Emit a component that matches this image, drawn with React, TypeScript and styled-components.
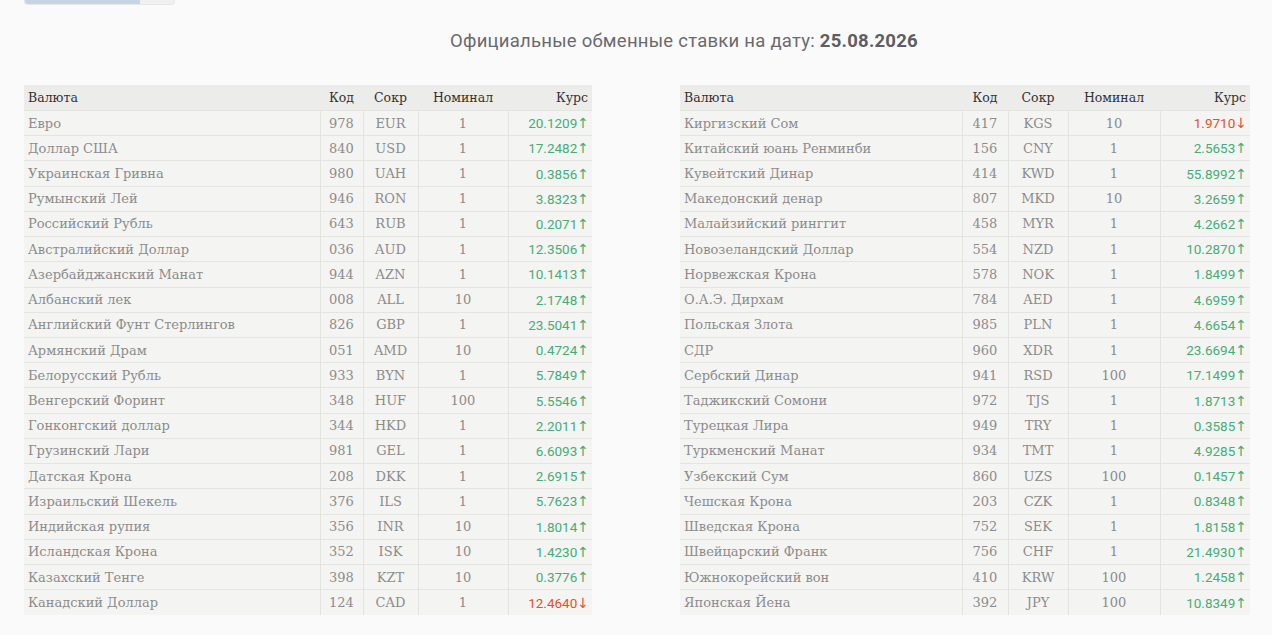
import React from 'react';
import styled, { createGlobalStyle } from 'styled-components';

type Rate = {
    name: string;
    code: string;
    abbr: string;
    nominal: number;
    rate: string;
    up: boolean;
};

const left: Rate[] = [
    { name: 'Евро', code: '978', abbr: 'EUR', nominal: 1, rate: '20.1209', up: true },
    { name: 'Доллар США', code: '840', abbr: 'USD', nominal: 1, rate: '17.2482', up: true },
    { name: 'Украинская Гривна', code: '980', abbr: 'UAH', nominal: 1, rate: '0.3856', up: true },
    { name: 'Румынский Лей', code: '946', abbr: 'RON', nominal: 1, rate: '3.8323', up: true },
    { name: 'Российский Рубль', code: '643', abbr: 'RUB', nominal: 1, rate: '0.2071', up: true },
    { name: 'Австралийский Доллар', code: '036', abbr: 'AUD', nominal: 1, rate: '12.3506', up: true },
    { name: 'Азербайджанский Манат', code: '944', abbr: 'AZN', nominal: 1, rate: '10.1413', up: true },
    { name: 'Албанский лек', code: '008', abbr: 'ALL', nominal: 10, rate: '2.1748', up: true },
    { name: 'Английский Фунт Стерлингов', code: '826', abbr: 'GBP', nominal: 1, rate: '23.5041', up: true },
    { name: 'Армянский Драм', code: '051', abbr: 'AMD', nominal: 10, rate: '0.4724', up: true },
    { name: 'Белорусский Рубль', code: '933', abbr: 'BYN', nominal: 1, rate: '5.7849', up: true },
    { name: 'Венгерский Форинт', code: '348', abbr: 'HUF', nominal: 100, rate: '5.5546', up: true },
    { name: 'Гонконгский доллар', code: '344', abbr: 'HKD', nominal: 1, rate: '2.2011', up: true },
    { name: 'Грузинский Лари', code: '981', abbr: 'GEL', nominal: 1, rate: '6.6093', up: true },
    { name: 'Датская Крона', code: '208', abbr: 'DKK', nominal: 1, rate: '2.6915', up: true },
    { name: 'Израильский Шекель', code: '376', abbr: 'ILS', nominal: 1, rate: '5.7623', up: true },
    { name: 'Индийская рупия', code: '356', abbr: 'INR', nominal: 10, rate: '1.8014', up: true },
    { name: 'Исландская Крона', code: '352', abbr: 'ISK', nominal: 10, rate: '1.4230', up: true },
    { name: 'Казахский Тенге', code: '398', abbr: 'KZT', nominal: 10, rate: '0.3776', up: true },
    { name: 'Канадский Доллар', code: '124', abbr: 'CAD', nominal: 1, rate: '12.4640', up: false },
];

const right: Rate[] = [
    { name: 'Киргизский Сом', code: '417', abbr: 'KGS', nominal: 10, rate: '1.9710', up: false },
    { name: 'Китайский юань Ренминби', code: '156', abbr: 'CNY', nominal: 1, rate: '2.5653', up: true },
    { name: 'Кувейтский Динар', code: '414', abbr: 'KWD', nominal: 1, rate: '55.8992', up: true },
    { name: 'Македонский денар', code: '807', abbr: 'MKD', nominal: 10, rate: '3.2659', up: true },
    { name: 'Малайзийский ринггит', code: '458', abbr: 'MYR', nominal: 1, rate: '4.2662', up: true },
    { name: 'Новозеландский Доллар', code: '554', abbr: 'NZD', nominal: 1, rate: '10.2870', up: true },
    { name: 'Норвежская Крона', code: '578', abbr: 'NOK', nominal: 1, rate: '1.8499', up: true },
    { name: 'О.А.Э. Дирхам', code: '784', abbr: 'AED', nominal: 1, rate: '4.6959', up: true },
    { name: 'Польская Злота', code: '985', abbr: 'PLN', nominal: 1, rate: '4.6654', up: true },
    { name: 'СДР', code: '960', abbr: 'XDR', nominal: 1, rate: '23.6694', up: true },
    { name: 'Сербский Динар', code: '941', abbr: 'RSD', nominal: 100, rate: '17.1499', up: true },
    { name: 'Таджикский Сомони', code: '972', abbr: 'TJS', nominal: 1, rate: '1.8713', up: true },
    { name: 'Турецкая Лира', code: '949', abbr: 'TRY', nominal: 1, rate: '0.3585', up: true },
    { name: 'Туркменский Манат', code: '934', abbr: 'TMT', nominal: 1, rate: '4.9285', up: true },
    { name: 'Узбекский Сум', code: '860', abbr: 'UZS', nominal: 100, rate: '0.1457', up: true },
    { name: 'Чешская Крона', code: '203', abbr: 'CZK', nominal: 1, rate: '0.8348', up: true },
    { name: 'Шведская Крона', code: '752', abbr: 'SEK', nominal: 1, rate: '1.8158', up: true },
    { name: 'Швейцарский Франк', code: '756', abbr: 'CHF', nominal: 1, rate: '21.4930', up: true },
    { name: 'Южнокорейский вон', code: '410', abbr: 'KRW', nominal: 100, rate: '1.2458', up: true },
    { name: 'Японская Йена', code: '392', abbr: 'JPY', nominal: 100, rate: '10.8349', up: true },
];

const GlobalStyle = createGlobalStyle`
    body {
        margin: 0;
        background: #fafafa;
        font-family: Roboto, 'Noto Sans', sans-serif;
    }
`;

const Page = styled.div`
    padding: 0 22px 0 24px;
`;

const TabStrip = styled.div`
    width: 149px;
    height: 4px;
    display: flex;
    background: #f0f0f0;
    border: 1px solid #e6e6e6;
    border-top: none;
    border-radius: 0 0 4px 4px;
    overflow: hidden;
`;

const TabFill = styled.div`
    background: #c6d5e3;
`;

const Title = styled.h2`
    margin: 25px 0 0;
    padding-left: 94px;
    text-align: center;
    font-size: 18.5px;
    letter-spacing: 0.25px;
    font-weight: 400;
    color: #6a6a6e;
    line-height: 22px;

    b {
        font-weight: 700;
        color: #5d5d62;
    }
`;

const Tables = styled.div`
    display: flex;
    gap: 44px;
    margin-top: 33px;
`;

const Divider = styled.div`
    width: 1px;
    background: #e6e6e6;
    height: 530px;
`;

const Table = styled.table<{ $width: number }>`
    width: ${(p) => p.$width}px;
    border-collapse: collapse;
    table-layout: fixed;
    font-family: 'DejaVu Serif', 'Liberation Serif', serif;
    font-size: 13px;
`;

const Col = styled.col<{ $w: number }>`
    width: ${(p) => p.$w}px;
`;

const Th = styled.th<{ $align?: string }>`
    height: 25px;
    padding: 0 4px;
    background: #ececea;
    color: #333;
    font-weight: 400;
    font-size: 12.5px;
    text-align: ${(p) => p.$align || 'center'};
`;

const Tr = styled.tr`
    height: 25.2px;
    background: #f4f4f2;
`;

const Td = styled.td<{ $align?: string }>`
    padding: 0 4px;
    color: #8c8c8c;
    border-top: 1px solid #e4e4e1;
    border-left: 1px solid #e4e4e1;
    text-align: ${(p) => p.$align || 'center'};
    white-space: nowrap;

    &:first-child {
        border-left: none;
    }
`;

const RateCell = styled(Td)<{ $up: boolean }>`
    font-family: Roboto, sans-serif;
    font-size: 13.5px;
    padding-right: 3px;
    color: ${(p) => (p.$up ? '#46ad77' : '#e4512a')};
`;

const Arrow = styled.span`
    font-family: 'DejaVu Sans', sans-serif;
    font-size: 14px;
`;

const RatesTable: React.FC<{ rows: Rate[]; cols: number[] }> = ({ rows, cols }) => (
    <Table $width={cols.reduce((a, b) => a + b, 0)}>
        <colgroup>
            {cols.map((w, i) => (
                <Col key={i} $w={w} />
            ))}
        </colgroup>
        <thead>
            <tr>
                <Th $align="left">Валюта</Th>
                <Th>Код</Th>
                <Th>Сокр</Th>
                <Th>Номинал</Th>
                <Th $align="right">Курс</Th>
            </tr>
        </thead>
        <tbody>
            {rows.map((r) => (
                <Tr key={r.abbr}>
                    <Td $align="left">{r.name}</Td>
                    <Td>{r.code}</Td>
                    <Td>{r.abbr}</Td>
                    <Td>{r.nominal}</Td>
                    <RateCell $align="right" $up={r.up}>
                        {r.rate}
                        <Arrow>{r.up ? '↑' : '↓'}</Arrow>
                    </RateCell>
                </Tr>
            ))}
        </tbody>
    </Table>
);

const App: React.FC = () => (
    <>
        <GlobalStyle />
        <Page>
            <TabStrip>
                <TabFill style={{ width: '77%' }} />
            </TabStrip>
            <Title>
                Официальные обменные ставки на дату: <b>25.08.2026</b>
            </Title>
            <Tables>
                <RatesTable rows={left} cols={[296, 43, 55, 90, 84]} />
                <Divider />
                <RatesTable rows={right} cols={[282, 46, 60, 92, 90]} />
            </Tables>
        </Page>
    </>
);

export default App;
